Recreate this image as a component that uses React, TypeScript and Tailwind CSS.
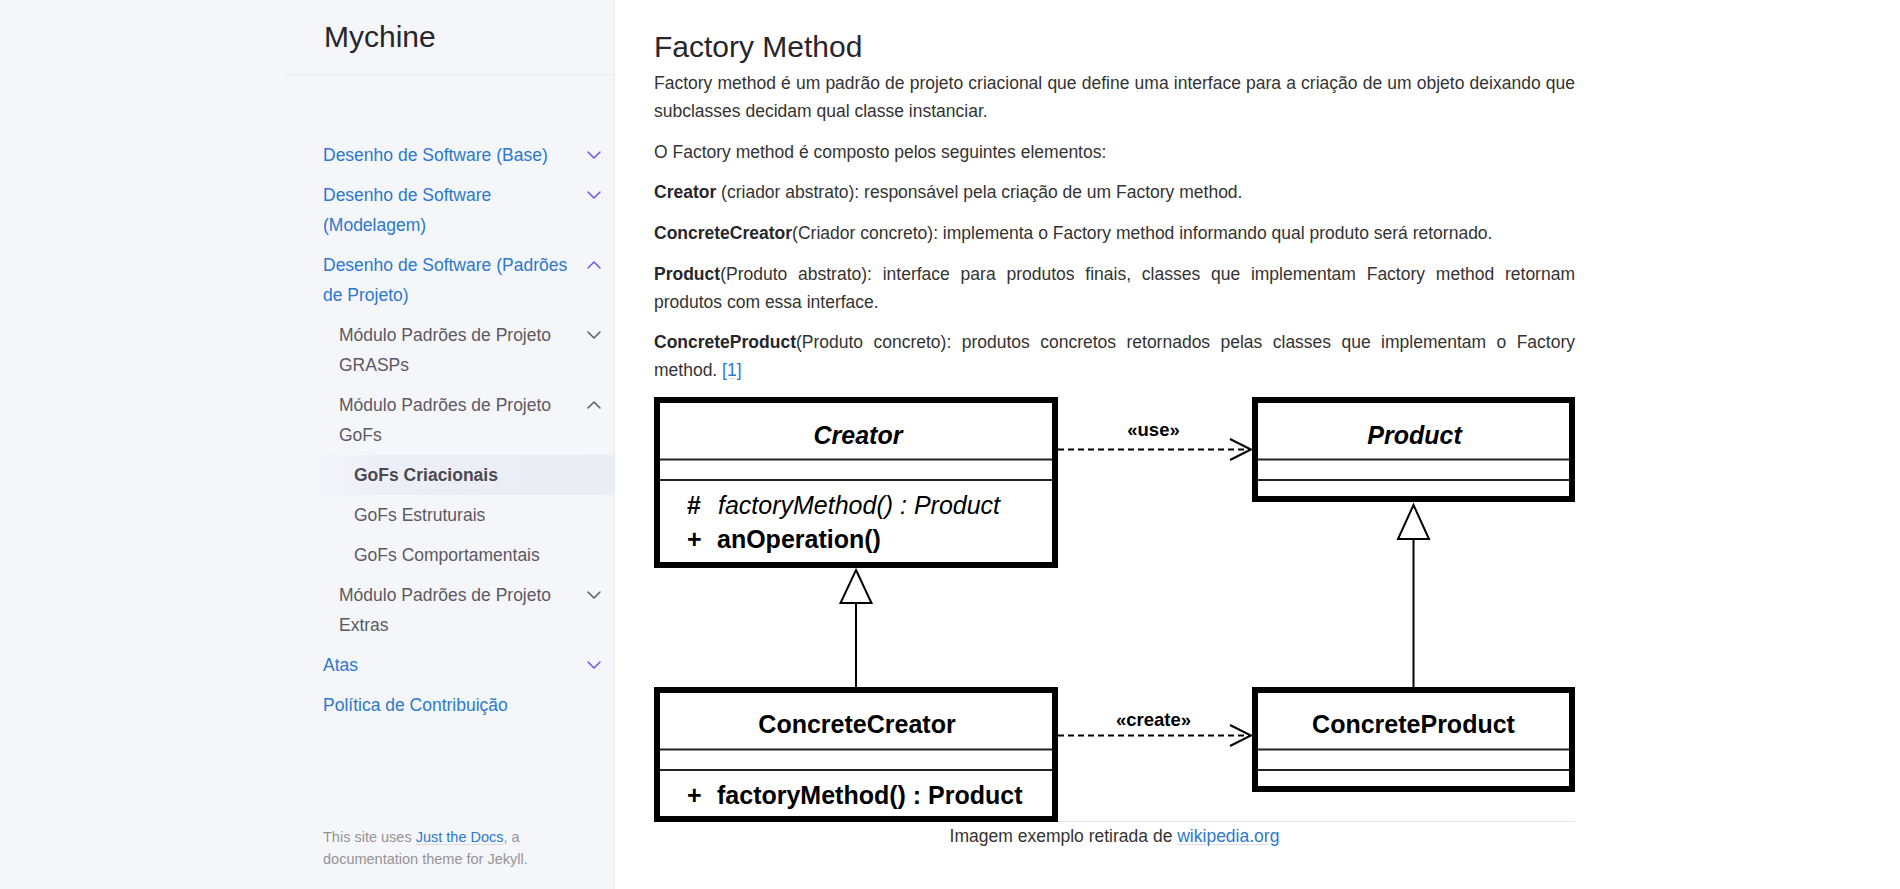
import React from "react";

type NavItem = {
  label: string;
  level: 1 | 2 | 3;
  chev?: "down" | "up";
  active?: boolean;
};

const nav: NavItem[] = [
  { label: "Desenho de Software (Base)", level: 1, chev: "down" },
  { label: "Desenho de Software (Modelagem)", level: 1, chev: "down" },
  { label: "Desenho de Software (Padrões de Projeto)", level: 1, chev: "up" },
  { label: "Módulo Padrões de Projeto GRASPs", level: 2, chev: "down" },
  { label: "Módulo Padrões de Projeto GoFs", level: 2, chev: "up" },
  { label: "GoFs Criacionais", level: 3, active: true },
  { label: "GoFs Estruturais", level: 3 },
  { label: "GoFs Comportamentais", level: 3 },
  { label: "Módulo Padrões de Projeto Extras", level: 2, chev: "down" },
  { label: "Atas", level: 1, chev: "down" },
  { label: "Política de Contribuição", level: 1 },
];

const indent = { 1: "ml-0 pl-[38px]", 2: "ml-[16px] pl-[38px]", 3: "ml-[32px] pl-[37px]" };

const Chevron = ({ dir, className }: { dir: "down" | "up"; className: string }) => (
  <svg width="24" height="24" viewBox="0 0 24 24" fill="none" stroke="currentColor" strokeWidth="1.5" strokeLinecap="round" strokeLinejoin="round" className={className}>
    <path d={dir === "up" ? "M6 15l6-6 6 6" : "M6 9l6 6 6-6"} />
  </svg>
);

// one justified line (the source wraps these lines at fixed places)
const J = ({ children }: { children: React.ReactNode }) => (
  <span className="block [text-align-last:justify]">{children}</span>
);

const B = ({ children }: { children: React.ReactNode }) => <b className="font-bold text-[#27262b]">{children}</b>;

const F = "'Liberation Sans', Arial, sans-serif";

const Diagram = () => (
  <svg width="921" height="425" viewBox="0 0 921 425" className="block">
    <rect x="0" y="0" width="921" height="425" fill="#fff" />
    <line x1="0" y1="424.5" x2="921" y2="424.5" stroke="#e4e4e4" strokeWidth="1" />
    <g fontFamily={F} fill="#000">
      {/* Creator */}
      <rect x="3" y="3" width="398" height="165" fill="#fff" stroke="#000" strokeWidth="6" />
      <line x1="6" y1="62.5" x2="398" y2="62.5" stroke="#222" strokeWidth="2" />
      <line x1="6" y1="83" x2="398" y2="83" stroke="#222" strokeWidth="2" />
      <text x="204" y="47" fontSize="25" fontWeight="bold" fontStyle="italic" textAnchor="middle">Creator</text>
      <text x="33" y="117" fontSize="25" fontWeight="bold">#</text>
      <text x="64" y="117" fontSize="25" fontStyle="italic">factoryMethod() : Product</text>
      <text x="33" y="151" fontSize="25" fontWeight="bold">+</text>
      <text x="63" y="151" fontSize="25" fontWeight="bold">anOperation()</text>

      {/* Product */}
      <rect x="601" y="3" width="317" height="99" fill="#fff" stroke="#000" strokeWidth="6" />
      <line x1="604" y1="62.5" x2="915" y2="62.5" stroke="#222" strokeWidth="2" />
      <line x1="604" y1="83" x2="915" y2="83" stroke="#222" strokeWidth="2" />
      <text x="760.5" y="47" fontSize="25" fontWeight="bold" fontStyle="italic" textAnchor="middle">Product</text>

      {/* use */}
      <line x1="404" y1="52.5" x2="596" y2="52.5" stroke="#000" strokeWidth="2" strokeDasharray="6 4" />
      <polyline points="576,42 597,52.5 576,63" fill="none" stroke="#000" strokeWidth="2" />
      <text x="499.5" y="39" fontSize="18.5" fontWeight="bold" textAnchor="middle">«use»</text>

      {/* generalizations */}
      <path d="M202 173 L217.5 206 L186.5 206 Z" fill="#fff" stroke="#000" strokeWidth="2" />
      <line x1="202" y1="206" x2="202" y2="290" stroke="#000" strokeWidth="2" />
      <path d="M759.5 108 L775 142 L744 142 Z" fill="#fff" stroke="#000" strokeWidth="2" />
      <line x1="759.5" y1="142" x2="759.5" y2="290" stroke="#000" strokeWidth="2" />

      {/* ConcreteCreator */}
      <rect x="3" y="293" width="398" height="129" fill="#fff" stroke="#000" strokeWidth="6" />
      <line x1="6" y1="352.5" x2="398" y2="352.5" stroke="#222" strokeWidth="2" />
      <line x1="6" y1="373" x2="398" y2="373" stroke="#222" strokeWidth="2" />
      <text x="203" y="336" fontSize="25" fontWeight="bold" textAnchor="middle">ConcreteCreator</text>
      <text x="33" y="407" fontSize="25" fontWeight="bold">+</text>
      <text x="63" y="407" fontSize="25" fontWeight="bold">factoryMethod() : Product</text>

      {/* ConcreteProduct */}
      <rect x="601" y="293" width="317" height="99" fill="#fff" stroke="#000" strokeWidth="6" />
      <line x1="604" y1="352.5" x2="915" y2="352.5" stroke="#222" strokeWidth="2" />
      <line x1="604" y1="373" x2="915" y2="373" stroke="#222" strokeWidth="2" />
      <text x="759.5" y="336" fontSize="25" fontWeight="bold" textAnchor="middle">ConcreteProduct</text>

      {/* create */}
      <line x1="404" y1="338.5" x2="596" y2="338.5" stroke="#000" strokeWidth="2" strokeDasharray="6 4" />
      <polyline points="576,328 597,338.5 576,349" fill="none" stroke="#000" strokeWidth="2" />
      <text x="499.5" y="329" fontSize="18.5" fontWeight="bold" textAnchor="middle">«create»</text>
    </g>
  </svg>
);

export default function App() {
  return (
    <div className="flex min-h-screen w-full bg-white font-['Liberation_Sans',Arial,sans-serif]">
      <aside className="flex h-[889px] w-[615px] shrink-0 flex-col border-r border-[#eeebee] bg-[#f5f6fa]">
        <div className="ml-[285px] flex h-full w-[329px] flex-col">
          <div className="flex h-[75px] items-center border-b border-[#eeebee] pl-[39px] text-[30px] leading-[36px] text-[#27262b]">
            Mychine
          </div>
          <nav className="mt-[60px]">
            {nav.map((it) => (
              <div
                key={it.label}
                className={`flex ${indent[it.level]} ${
                  it.active
                    ? "bg-[linear-gradient(-90deg,#ebedf5_0%,rgba(235,237,245,0.8)_80%,rgba(235,237,245,0)_100%)]"
                    : ""
                }`}
              >
                <div
                  className={`flex-1 py-[5px] text-[17.5px] leading-[30px] ${
                    it.level === 1 ? "text-[#2b78d0]" : it.active ? "font-bold text-[#4a4950]" : "text-[#5c5962]"
                  }`}
                >
                  {it.label}
                </div>
                <div className="flex h-[40px] w-[40px] shrink-0 items-center justify-center">
                  {it.chev && (
                    <Chevron dir={it.chev} className={it.level === 1 ? "text-[#7253ed]" : "text-[#5c5962]"} />
                  )}
                </div>
              </div>
            ))}
          </nav>
          <footer className="mt-auto pb-[19px] pl-[38px] pr-[40px] text-[14.5px] leading-[22px] text-[#959396]">
            This site uses <a className="text-[#2b78d0] underline decoration-[#dcdce4] underline-offset-2">Just the Docs</a>, a
            documentation theme for Jekyll.
          </footer>
        </div>
      </aside>

      <main className="flex-1">
        <div className="ml-[39px] w-[921px] pt-[29px] text-[17.5px] leading-[28px] text-[#333333]">
          <h1 className="text-[30px] font-normal leading-[36px] text-[#27262b]">Factory Method</h1>
          <p className="mt-[4px] text-justify">
            <J>
              Factory method é um padrão de projeto criacional que define uma interface para a criação de um objeto
              deixando que
            </J>
            subclasses decidam qual classe instanciar.
          </p>
          <p className="mt-[12.7px]">O Factory method é composto pelos seguintes elementos:</p>
          <p className="mt-[12.7px]">
            <B>Creator</B> (criador abstrato): responsável pela criação de um Factory method.
          </p>
          <p className="mt-[12.7px]">
            <B>ConcreteCreator</B>(Criador concreto): implementa o Factory method informando qual produto será
            retornado.
          </p>
          <p className="mt-[12.7px]">
            <J>
              <B>Product</B>(Produto abstrato): interface para produtos finais, classes que implementam Factory method
              retornam
            </J>
            produtos com essa interface.
          </p>
          <p className="mt-[12.7px]">
            <J>
              <B>ConcreteProduct</B>(Produto concreto): produtos concretos retornados pelas classes que implementam o
              Factory
            </J>
            method. <a className="text-[#2b78d0] underline decoration-[#dcdce4] underline-offset-2">[1]</a>
          </p>
          <div className="mt-[12.5px]">
            <Diagram />
          </div>
          <p className="text-center">
            Imagem exemplo retirada de{" "}
            <a className="text-[#2b78d0] underline decoration-[#dcdce4] underline-offset-2">wikipedia.org</a>
          </p>
        </div>
      </main>
    </div>
  );
}
